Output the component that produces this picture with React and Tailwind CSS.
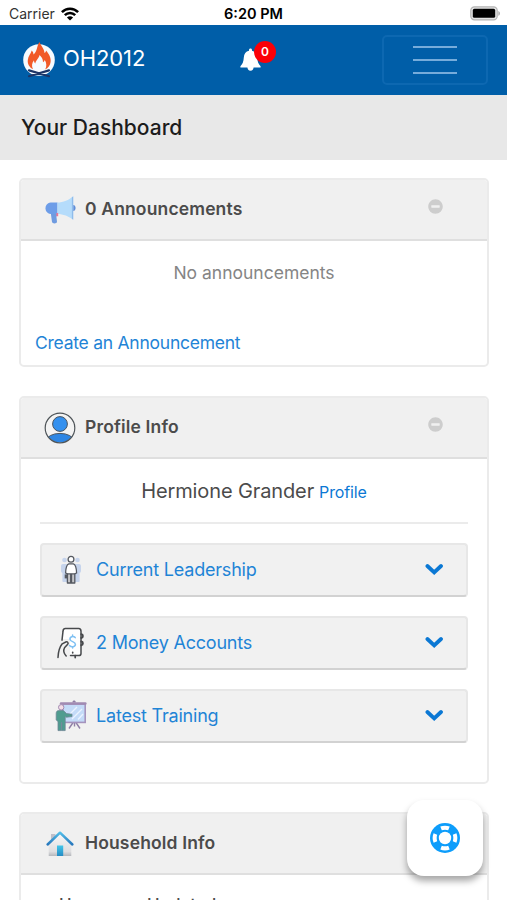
import { FaMinusCircle } from 'react-icons/fa';

const WifiIcon = () => (
    <svg className="w-[18px] h-[14px]" viewBox="0 0 18 14" fill="none" stroke="#000" strokeWidth="2.5">
        <path d="M0.9 5.2C5.4 0.6 12.6 0.6 17.1 5.2" />
        <path d="M3.8 8.2C6.8 5.2 11.2 5.2 14.2 8.2" />
        <path d="M9 13.6L5.9 10.4C7.7 8.8 10.3 8.8 12.1 10.4Z" fill="#000" stroke="none" />
    </svg>
);

const BatteryIcon = () => (
    <svg className="w-[31px] h-[15px]" viewBox="0 0 31 15">
        <rect x="0.8" y="0.8" width="26.4" height="13" rx="3.6" fill="#e4e4e4" stroke="#b4b4b4" strokeWidth="1.2" />
        <rect x="2.8" y="2.8" width="22.4" height="9" rx="1.6" fill="#000" />
        <path d="M28.4 5v4.8c2-.7 2-4.1 0-4.8z" fill="#a5a5a5" />
    </svg>
);

const BellIcon = () => (
    <svg className="w-[21px] h-[23px]" viewBox="0 0 21 23" fill="#fff">
        <path d="M10.5 0.5C11.4 0.5 12 1.1 12 2V2.8C15.2 3.5 17 6 17.2 9.5C17.4 13.8 18.5 16 20.6 18.2V19.4H0.4V18.2C2.5 16 3.6 13.8 3.8 9.5C4 6 5.8 3.5 9 2.8V2C9 1.1 9.6 0.5 10.5 0.5Z" />
        <path d="M7.4 19H13.6C13.6 21.4 12.4 22.7 10.5 22.7S7.4 21.4 7.4 19Z" />
    </svg>
);

const ChevronIcon = () => (
    <svg className="w-[18px] h-[18px]" viewBox="0 0 18 18" fill="none" stroke="#0b78d4" strokeWidth="3.8">
        <path d="M2.4 5L9.2 11.4L16 5" strokeLinecap="round" strokeLinejoin="miter" />
    </svg>
);

const CampfireLogo = () => (
    <svg className="w-8 h-9" viewBox="0 0 32 36">
        <circle cx="16" cy="18" r="15.8" fill="#f7fbff" />
        <path d="M16.5 0C18 4 21 6 21.5 11C22.5 10.5 23 9.5 23 8.5C26 12 28.3 16 27.6 20C27.2 23.5 25 26 22.2 27.5C24 24 23.5 20.5 21.7 18C21.3 19.2 20.8 19.8 20 20.2C20 17 18.5 14.8 16.5 13C16 16.5 12.8 18 12.3 21.5C11.2 20.5 11 19.5 11 18.3C8.7 21 8.5 24.5 10 27.3C6.5 25.5 4.3 22 4.8 18C5.2 14 7.7 12 8.7 8.5C10 9.6 10.4 11 10.5 12.5C14.5 9.5 13.5 4 16.5 0Z" fill="#f15a29" />
        <path d="M6 28.4L26 34.2M26 28.4L6 34.2" stroke="#1c3567" strokeWidth="2.2" strokeLinecap="round" />
    </svg>
);

const MegaphoneIcon = () => (
    <svg className="w-8 h-8" viewBox="0 0 32 32">
        <path d="M6.5 17h6.4l.5 4.4-1 1 .6 5.4c0 2-4.5 2.2-5 .3z" fill="#6f9be0" />
        <path d="M8 8.5H13.5V20H8C4.2 20 1.5 18 1.5 14.2S4.2 8.5 8 8.5Z" fill="#6d9de8" />
        <path d="M13.5 8.5C19 8.5 25 6 29.2 2.2V25.8C25 22.3 19 20 13.5 20Z" fill="#b5dcfb" />
        <path d="M27.9 3.4L29.2 2.2V25.8L27.9 24.7Z" fill="#8fbceb" />
        <path d="M29.3 11c3 .3 3 5.7 0 6z" fill="#5f8ed8" />
        <path d="M12.4 19h1.8v3.2h-1.8z" fill="#ee7792" />
    </svg>
);

const ProfileIcon = () => (
    <svg className="w-8 h-8" viewBox="0 0 32 32">
        <defs>
            <clipPath id="profile-ring">
                <circle cx="16" cy="16" r="14.6" />
            </clipPath>
        </defs>
        <circle cx="16" cy="16" r="14.8" fill="#f3f3f3" />
        <ellipse cx="16" cy="28.6" rx="13.5" ry="7.2" fill="#2e86e4" stroke="#4a5560" strokeWidth="1" clipPath="url(#profile-ring)" />
        <circle cx="16" cy="12" r="7.4" fill="#3490ee" stroke="#4a5560" strokeWidth="1" />
        <circle cx="16" cy="16" r="14.8" fill="none" stroke="#4f5559" strokeWidth="1.2" />
    </svg>
);

const HouseIcon = () => (
    <svg className="w-8 h-8" viewBox="0 0 32 32">
        <defs>
            <linearGradient id="roof" x1="0" y1="0" x2="0" y2="1">
                <stop offset="0" stopColor="#52bde8" />
                <stop offset="1" stopColor="#2878bd" />
            </linearGradient>
            <linearGradient id="walls" x1="0" y1="0" x2="0" y2="1">
                <stop offset="0" stopColor="#f8f8f8" />
                <stop offset="0.8" stopColor="#dedee0" />
                <stop offset="1" stopColor="#b5b8bd" />
            </linearGradient>
            <linearGradient id="door" x1="0" y1="0" x2="0" y2="1">
                <stop offset="0" stopColor="#42c5e8" />
                <stop offset="1" stopColor="#258bc4" />
            </linearGradient>
        </defs>
        <path d="M7 6h4.4v7L7 17z" fill="#bfc0ca" />
        <path d="M16 5.5L27.3 16.2V28H4.7V16.2Z" fill="url(#walls)" />
        <path d="M13 17.6h6.2V28H13z" fill="url(#door)" />
        <path d="M3.6 16.5L16 4.7L28.4 16.5" fill="none" stroke="url(#roof)" strokeWidth="2.5" strokeLinecap="round" strokeLinejoin="round" />
    </svg>
);

const LeadershipIcon = () => (
    <svg className="w-8 h-8" viewBox="0 0 32 32">
        <g fill="#c6d4ec">
            <circle cx="9.5" cy="6" r="2.3" />
            <circle cx="22.5" cy="6" r="2.3" />
            <rect x="6" y="10" width="7" height="9" rx="2" />
            <rect x="19" y="10" width="7" height="9" rx="2" />
            <rect x="7.4" y="17" width="5" height="11" rx="1" />
            <rect x="19.6" y="17" width="5" height="11" rx="1" />
        </g>
        <g fill="#fff" stroke="#555961" strokeWidth="1.3" strokeLinejoin="round">
            <circle cx="16" cy="5.3" r="2.9" />
            <path d="M12.4 18v11h3.3v-9h.8v9h3.3V18z" fill="#c4c4c7" />
            <path d="M13.8 9.8h4.6c2.1.6 3 3.4 3.2 9.2l-2 .8H12.6l-2-.8c.2-5.8 1.1-8.6 3.2-9.2z" />
        </g>
        <path d="M9.7 20.4h3v4h-3z" fill="#555961" />
    </svg>
);

const MoneyIcon = () => (
    <svg className="w-8 h-8" viewBox="0 0 32 32" fill="none" stroke="#47494c" strokeWidth="1.5" strokeLinecap="round" strokeLinejoin="round">
        <path d="M8 12V4.4C8 2.8 8.8 2 10.4 2H23.7C25.2 2 26 2.8 26 4.4V26.5C26 28 25.2 29 23.7 29H15V12Z" fill="#fff" stroke="none" />
        <path d="M7 13.2L8 4.4C8 2.8 8.8 1.6 10.4 1.6H23.7C25.2 1.6 26 2.8 26 4.4V26.5C26 28 25.2 28.6 23.7 28.6H15.5" />
        <path d="M26.3 7.2c2 .2 2.1 3.4 0 3.7M26.3 14.5c2 .2 2.1 3.4 0 3.7" strokeWidth="2" />
        <path d="M3 30.5C3.2 25 4.3 20.5 7.2 16.8L10.8 15C12.5 14.3 13.8 16 12.7 17.2L9.5 20.8C8.3 23 9 26.5 11.2 29" />
        <path d="M20.2 10.6C18.5 8.8 14.6 9.5 15 12.3C15.4 15 20.2 14.4 20.4 17.3C20.5 20 16.5 20.6 14.5 18.5M17.6 8V9.4M17.6 19.8V21" stroke="#7fc0f2" strokeWidth="1.5" />
        <path d="M17.7 25.4v.4M20.2 28.6v2" strokeWidth="1.7" />
    </svg>
);

const TrainingIcon = () => (
    <svg className="w-8 h-8" viewBox="0 0 32 32">
        <path d="M18.4 22L14 28.5M19.5 22v4.5M20.6 22L25 28.5" stroke="#8f7fa6" strokeWidth="1.4" />
        <path d="M17.4 2.4c0-2.6 3.4-2.6 3.4 0z" fill="#8f7fa6" />
        <rect x="7.6" y="4" width="22.6" height="18.4" fill="#c4dbf8" stroke="#a593bd" strokeWidth="1.6" />
        <path d="M15 14L22 7M17 19L27 9M23 19.5L28 14" stroke="#eaf3ff" strokeWidth="1.4" />
        <rect x="4.8" y="2.2" width="26.8" height="2.6" rx="1.2" fill="#a18bb2" />
        <circle cx="6.2" cy="7.3" r="2.7" fill="#f3dde6" stroke="#a18bb2" strokeWidth="1" />
        <path d="M3.6 10.6H8.4L11.6 13.6L17 14.2V16.6L11.4 17.2L10.2 16.6V30.6H6.8V22.5H6.4V30.6H3V21.5L1.2 20V13.6C1.2 11.8 2 10.6 3.6 10.6Z" fill="#4f9c8f" stroke="#6e8596" strokeWidth=".8" />
    </svg>
);

const LifeRing = () => (
    <svg className="w-[30px] h-[30px]" viewBox="0 0 30 30">
        <circle cx="15" cy="15" r="15" fill="#0d9dfb" />
        <circle cx="15" cy="15" r="6.2" fill="#fff" />
        <g fill="#fff">
            <path id="ring-slot" d="M10.3 3.6C13.3 2.3 16.7 2.3 19.7 3.6L18.2 7.2C16 6.5 14 6.5 11.8 7.2Z" />
            <use href="#ring-slot" transform="rotate(90 15 15)" />
            <use href="#ring-slot" transform="rotate(180 15 15)" />
            <use href="#ring-slot" transform="rotate(270 15 15)" />
        </g>
    </svg>
);

const Card = ({ icon, title, className, children }) => (
    <section className={`ml-[19px] mr-[18px] rounded-[5px] border-2 border-[#ebebeb] bg-white overflow-hidden ${className}`}>
        <header className="flex h-[61px] items-center border-b-2 border-[#dfdfdf] bg-[#f0f0f0] pl-[23px] pr-[44px]">
            {icon}
            <h2 className="ml-[9px] flex-1 text-[17.5px] font-semibold tracking-[0.15px] text-[#4b4b4b]">{title}</h2>
            <FaMinusCircle className="mb-[6px] size-[15px] text-[#cdcdcd]" />
        </header>
        {children}
    </section>
);

const AccordionRow = ({ icon, label }) => (
    <button className="flex h-[54px] w-full items-center rounded-[4px] border-2 border-[#e7e7e7] border-b-[#d2d2d2] bg-[#f1f1f1] pl-[13px] pr-[23px] text-left">
        {icon}
        <span className="ml-[9px] flex-1 pb-[2px] text-[18px] tracking-[-0.2px] text-[#1f84d6]">{label}</span>
        <ChevronIcon />
    </button>
);

export default function App() {
    return (
        <div className="relative h-[900px] w-full overflow-hidden bg-white font-['Inter','Liberation_Sans',sans-serif]">
            <div className="grid h-[25px] grid-cols-3 items-center pl-[9px] pr-[6px] pt-[2px]">
                <div className="flex items-center gap-[6px] text-[14px] text-[#333]">
                    Carrier <WifiIcon />
                </div>
                <div className="pr-[3px] text-center text-[14.5px] font-semibold text-black">6:20 PM</div>
                <div className="flex justify-end">
                    <BatteryIcon />
                </div>
            </div>

            <nav className="flex h-[70px] items-center bg-[#005ea8] pl-[23px] pr-[19px]">
                <CampfireLogo />
                <span className="ml-2 w-[177px] pb-[3px] text-[22px] tracking-[-0.1px] text-white">OH2012</span>
                <div className="relative mb-[2px]">
                    <BellIcon />
                    <span className="absolute -top-[7px] left-[14px] flex size-[22px] items-center justify-center rounded-full bg-[#fb0007] text-[12px] font-semibold text-white">0</span>
                </div>
                <button className="ml-auto flex h-[50px] w-[106px] flex-col items-center justify-center gap-[11px] rounded-[5px] border-2 border-[#0d68b1]">
                    <span className="h-[2px] w-11 bg-[#76acdb]" />
                    <span className="h-[2px] w-11 bg-[#76acdb]" />
                    <span className="h-[2px] w-11 bg-[#76acdb]" />
                </button>
            </nav>

            <div className="flex h-[65px] items-center bg-[#e8e8e8] pl-[21px]">
                <h1 className="text-[21px] font-medium text-[#1c1c1c]">Your Dashboard</h1>
            </div>

            <Card icon={<MegaphoneIcon />} title="0 Announcements" className="mt-[18px] h-[189px]">
                <p className="mt-[19px] text-center text-[17.5px] text-[#858585]">No announcements</p>
                <a className="ml-[14px] mt-[44px] block text-[17.5px] tracking-[-0.25px] text-[#1f84d6]">Create an Announcement</a>
            </Card>

            <Card icon={<ProfileIcon />} title="Profile Info" className="mt-[29px] h-[388px]">
                <div className="px-[19px]">
                    <p className="flex h-[65px] items-baseline justify-center gap-[5px] border-b-2 border-[#ebebeb] pt-[17px] text-[20px] tracking-[-0.12px] text-[#4b4b4b]">
                        Hermione Grander <a className="text-[16px] text-[#0b78d4]">Profile</a>
                    </p>
                    <div className="mt-[19px] flex flex-col gap-[19px]">
                        <AccordionRow icon={<LeadershipIcon />} label="Current Leadership" />
                        <AccordionRow icon={<MoneyIcon />} label="2 Money Accounts" />
                        <AccordionRow icon={<TrainingIcon />} label="Latest Training" />
                    </div>
                </div>
            </Card>

            <Card icon={<HouseIcon />} title="Household Info" className="mt-[28px] h-[300px]">
                <p className="ml-[38px] mt-[22px] text-[17px] leading-none font-medium text-[#4b4b4b]">Username Updated</p>
            </Card>

            <button className="absolute left-[407px] top-[800px] flex h-[76px] w-[76px] items-center justify-center rounded-[17px] bg-white shadow-[0_5px_7px_rgba(0,0,0,0.35)]">
                <LifeRing />
            </button>
        </div>
    );
}
